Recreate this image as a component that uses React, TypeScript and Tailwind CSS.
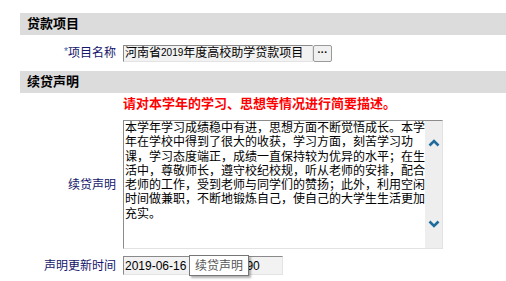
const lines = [
  '本学年学习成绩稳中有进，思想方面不断觉悟成长。本学',
  '年在学校中得到了很大的收获，学习方面，刻苦学习功',
  '课，学习态度端正，成绩一直保持较为优异的水平；在生',
  '活中，尊敬师长，遵守校纪校规，听从老师的安排，配合',
  '老师的工作，受到老师与同学们的赞扬；此外，利用空闲',
  '时间做兼职，不断地锻炼自己，使自己的大学生生活更加',
  '充实。',
]

function Chevron({ up }: { up?: boolean }) {
  return (
    <svg width="12" height="8" viewBox="0 0 12 8">
      <polyline
        points={up ? '1.5,6.5 6,2 10.5,6.5' : '1.5,1.5 6,6 10.5,1.5'}
        fill="none"
        stroke="#1f6c9c"
        strokeWidth="2.6"
      />
    </svg>
  )
}

function SectionHeader({ title }: { title: string }) {
  return (
    <div className="h-[22px] bg-[#dcdcdc] pl-[7px] flex items-center font-bold text-[13px] text-black">
      {title}
    </div>
  )
}

export default function App() {
  return (
    <div
      className="w-[506px] h-[281px] bg-white pt-[13px] pl-[20px] overflow-hidden"
      style={{ fontFamily: '"Liberation Sans", "Noto Sans CJK SC", sans-serif' }}
    >
      <SectionHeader title="贷款项目" />

      {/* 项目名称 */}
      <div className="h-[36px] flex items-center">
        <div className="w-[96px] text-right text-[12px] text-[#14146a]">
          <span className="text-[#3a64a8] text-[10px] relative top-[-2px]">*</span>项目名称
        </div>
        <div className="ml-[7px] w-[190px] h-[17px] bg-[#f2f2f2] border border-t-[#8a8a8a] border-l-[#8a8a8a] border-b-[#e3e3e3] border-r-[#e3e3e3] flex items-center pl-[1px] text-[12px] leading-none text-black whitespace-nowrap overflow-hidden">
          河南省<span className="text-[10px]">2019</span>年度高校助学贷款项目
        </div>
        <button className="w-[19px] h-[17px] bg-[#f0f0f0] border border-[#9a9a9a] rounded-[2px] text-[10px] font-bold leading-none flex items-center justify-center text-black pb-[1px]">
          ···
        </button>
      </div>

      <SectionHeader title="续贷声明" />

      <div className="h-[22px] pl-[103px] flex items-center font-bold text-[13px] text-[#ff0000] whitespace-nowrap">
        请对本学年的学习、思想等情况进行简要描述。
      </div>

      {/* 续贷声明 */}
      <div className="mt-[5px] flex items-center">
        <div className="w-[96px] text-right text-[12px] text-[#14146a]">续贷声明</div>
        <div className="ml-[7px] w-[320px] h-[129px] flex border border-t-[#8c8c8c] border-l-[#8c8c8c] border-b-[#e2e2e2] border-r-[#e2e2e2] bg-white">
          <div className="flex-1 pl-[1px] text-[12px] leading-[14.3px] text-black whitespace-nowrap overflow-hidden">
            {lines.map((l) => (
              <div key={l}>{l}</div>
            ))}
          </div>
          <div className="w-[17px] bg-[#eeeeee] flex flex-col items-center justify-between pt-[18px] pb-[20px]">
            <Chevron up />
            <Chevron />
          </div>
        </div>
      </div>

      {/* 声明更新时间 */}
      <div className="mt-[7px] h-[19px] flex items-center">
        <div className="w-[96px] text-right text-[12px] text-[#14146a]">声明更新时间</div>
        <div className="relative ml-[7px] w-[160px] h-[19px] bg-[#f2f2f2] border border-t-[#8a8a8a] border-l-[#8a8a8a] border-b-[#e3e3e3] border-r-[#e3e3e3] flex items-center pl-[1px] text-[12px] text-black whitespace-nowrap">
          2019-06-16 10:21:35.190
          <div className="absolute left-[65px] top-[-2px] w-[60px] h-[21px] bg-white border border-[#767676] shadow-[2px_2px_2px_rgba(0,0,0,0.3)] flex items-center justify-center text-[12px] text-[#575757]">
            续贷声明
          </div>
        </div>
      </div>
    </div>
  )
}
